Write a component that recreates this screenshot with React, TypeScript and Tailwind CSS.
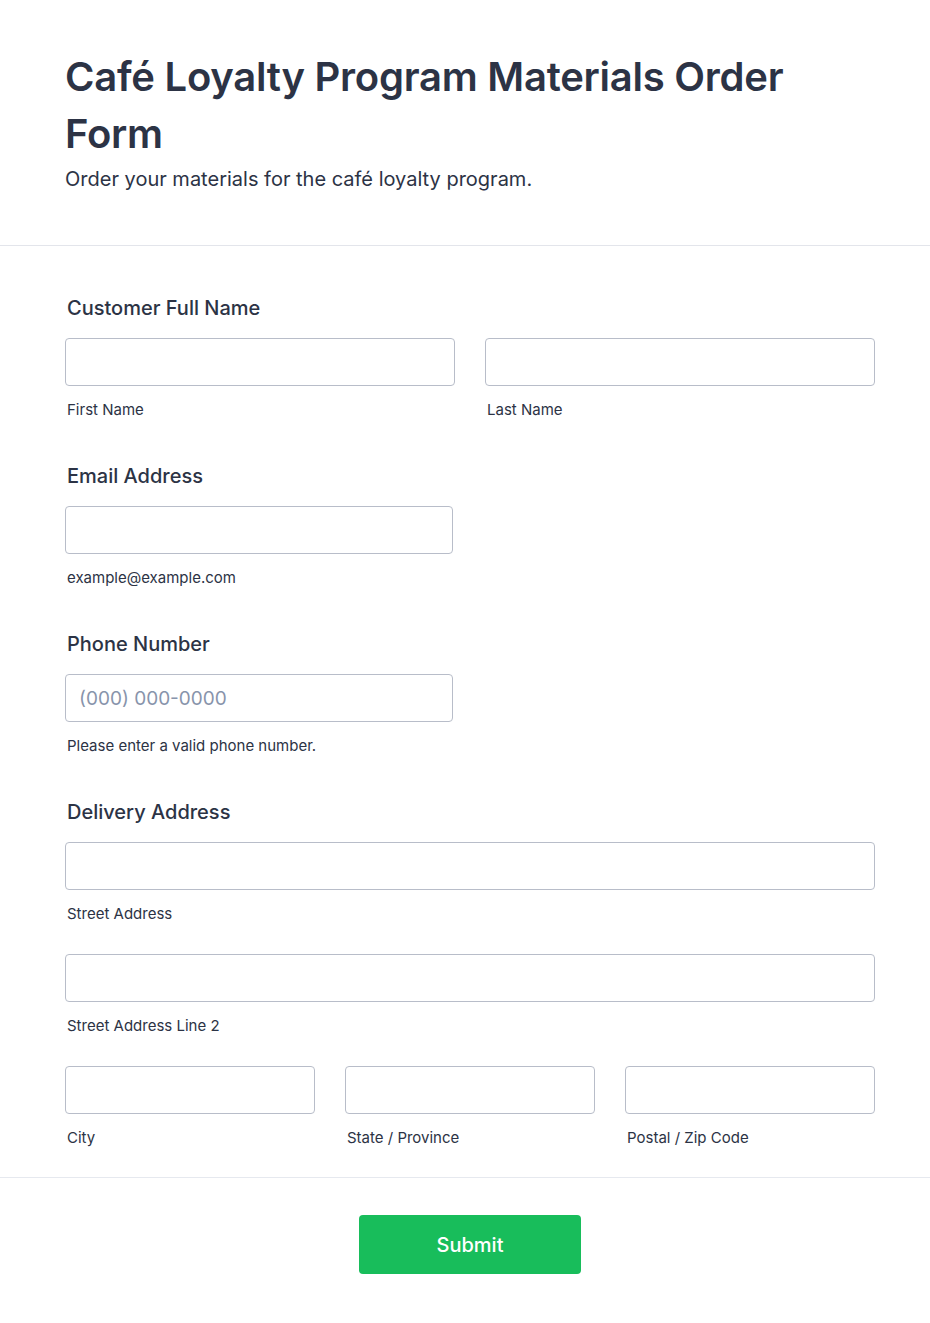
import React from "react";

const font = { fontFamily: "Inter, 'Noto Sans', sans-serif" };

function Input({ placeholder }: { placeholder?: string }) {
  return (
    <input
      type="text"
      placeholder={placeholder}
      className="block w-full h-[48px] rounded-[4px] border border-[#b8bdc9] bg-white px-[13px] text-[19px] text-[#2c3345] placeholder:text-[#8894ab] outline-none"
      style={font}
    />
  );
}

function Sub({ children }: { children: React.ReactNode }) {
  return <div className="mt-[14px] pl-[2px] text-[15px] leading-[20px] text-[#2c3345]">{children}</div>;
}

function Label({ children }: { children: React.ReactNode }) {
  return <div className="pl-[2px] text-[20px] leading-[28px] font-medium text-[#2c3345] mb-[16px]">{children}</div>;
}

export default function App() {
  return (
    <div className="min-h-[1323px] w-full bg-white" style={font}>
      <div className="pl-[65px] pr-[55px] pt-[48px] pb-[52px]">
        <h1 className="text-[40px] leading-[57px] font-semibold text-[#2c3345] tracking-[-0.25px]">
          Café Loyalty Program Materials Order Form
        </h1>
        <p className="mt-[4px] text-[20px] leading-[27px] text-[#2c3345]">
          Order your materials for the café loyalty program.
        </p>
      </div>
      <div className="h-px bg-[#e3e5eb]" />
      <div className="pl-[65px] pr-[55px] pt-[48px] pb-[29px] flex flex-col gap-[42px]">
        <div>
          <Label>Customer Full Name</Label>
          <div className="grid grid-cols-2 gap-[30px]">
            <div>
              <Input />
              <Sub>First Name</Sub>
            </div>
            <div>
              <Input />
              <Sub>Last Name</Sub>
            </div>
          </div>
        </div>
        <div>
          <Label>Email Address</Label>
          <div className="w-[388px]">
            <Input />
            <Sub>example@example.com</Sub>
          </div>
        </div>
        <div>
          <Label>Phone Number</Label>
          <div className="w-[388px]">
            <Input placeholder="(000) 000-0000" />
            <Sub>Please enter a valid phone number.</Sub>
          </div>
        </div>
        <div>
          <Label>Delivery Address</Label>
          <div className="flex flex-col gap-[30px]">
            <div>
              <Input />
              <Sub>Street Address</Sub>
            </div>
            <div>
              <Input />
              <Sub>Street Address Line 2</Sub>
            </div>
            <div className="grid grid-cols-3 gap-[30px]">
              <div>
                <Input />
                <Sub>City</Sub>
              </div>
              <div>
                <Input />
                <Sub>State / Province</Sub>
              </div>
              <div>
                <Input />
                <Sub>Postal / Zip Code</Sub>
              </div>
            </div>
          </div>
        </div>
      </div>
      <div className="h-px bg-[#e6e9ef]" />
      <div className="pl-[65px] pr-[55px] flex justify-center pt-[37px] pb-[50px]">
        <button className="w-[222px] h-[59px] rounded-[4px] bg-[#18bd5b] text-white text-[20px] font-medium" style={font}>
          Submit
        </button>
      </div>
    </div>
  );
}
